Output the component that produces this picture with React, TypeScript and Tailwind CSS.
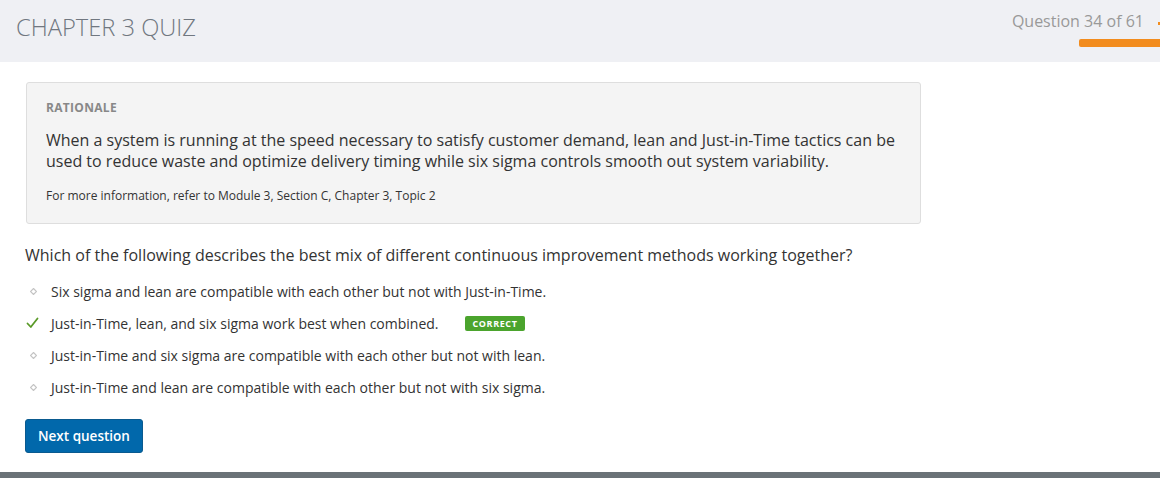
import React from 'react';

const OPTIONS = [
  { text: 'Six sigma and lean are compatible with each other but not with Just-in-Time.', correct: false },
  { text: 'Just-in-Time, lean, and six sigma work best when combined.', correct: true },
  { text: 'Just-in-Time and six sigma are compatible with each other but not with lean.', correct: false },
  { text: 'Just-in-Time and lean are compatible with each other but not with six sigma.', correct: false },
];

const Bullet = () => (
  <svg width="7" height="7" viewBox="0 0 7 7" className="block">
    <path d="M3.5 0.5 L6.5 3.5 L3.5 6.5 L0.5 3.5 Z" fill="none" stroke="#c4c4c4" strokeWidth="1.2" />
  </svg>
);

const Check = () => (
  <svg width="13" height="12" viewBox="0 0 13 12" className="block">
    <path d="M1.5 6.5 L4.8 10 L11.5 1.5" fill="none" stroke="#5a9a28" strokeWidth="1.8" strokeLinecap="round" strokeLinejoin="round" />
  </svg>
);

export default function App() {
  return (
    <div className="w-[1160px] h-[478px] bg-white flex flex-col overflow-hidden font-['Open_Sans',sans-serif] text-[#333]">
      {/* header */}
      <div className="h-[62px] bg-[#eff0f4] flex justify-between shrink-0">
        <h1 className="pl-[16px] pt-[10px] text-[23.7px] font-light text-[#707780]">CHAPTER 3 QUIZ</h1>
        <div className="flex flex-col items-end pt-[9px]">
          <div className="flex items-start">
            <span className="text-[16px] leading-[24px] text-[#999]">Question 34 of 61</span>
            <span className="ml-[14px] mt-[13px] w-[2px] h-[3px] bg-[#f28c1e]" />
          </div>
          <div className="mt-[6px] w-[81px] h-[8px] bg-[#f28c1e] rounded-l-[2px]" />
        </div>
      </div>

      <div className="flex-1 pl-[25px] pt-[20px]">
        {/* rationale */}
        <div className="ml-[1px] w-[895px] h-[142px] bg-[#f4f4f4] border border-[#dedede] rounded-[3px] pl-[19px] pr-[20px] pt-[16px]">
          <div className="text-[12px] font-bold text-[#888] tracking-[0.3px] leading-[18px]">RATIONALE</div>
          <p className="mt-[13px] text-[16px] leading-[21px] text-[#333]">
            When a system is running at the speed necessary to satisfy customer demand, lean and Just-in-Time tactics can be used to reduce waste and optimize delivery timing while six sigma controls smooth out system variability.
          </p>
          <p className="mt-[15px] text-[12px] leading-[18px] text-[#333]">
            For more information, refer to Module 3, Section C, Chapter 3, Topic 2
          </p>
        </div>

        {/* question */}
        <p className="mt-[20px] text-[16px] leading-[22px] text-[#333]">
          Which of the following describes the best mix of different continuous improvement methods working together?
        </p>

        <ul className="mt-[16px] flex flex-col gap-[14px]">
          {OPTIONS.map((o, i) => (
            <li key={i} className="flex items-center h-[18px] text-[14px] text-[#333]">
              <span className="w-[26px] flex items-center">
                {o.correct ? <span className="ml-[1px]"><Check /></span> : <span className="ml-[5px]"><Bullet /></span>}
              </span>
              <span>{o.text}</span>
              {o.correct && (
                <span className="ml-[26px] h-[15px] px-[8px] rounded-[2px] bg-[#4ba42d] text-white text-[9px] font-bold tracking-[0.6px] flex items-center leading-none">
                  CORRECT
                </span>
              )}
            </li>
          ))}
        </ul>

        <button className="mt-[23px] h-[34px] px-[12px] bg-[#0168ab] border border-[#0a5a8f] rounded-[3px] text-white text-[13.5px] font-semibold">
          Next question
        </button>
      </div>

      <div className="h-[6px] bg-[#6a7277] shrink-0" />
    </div>
  );
}
